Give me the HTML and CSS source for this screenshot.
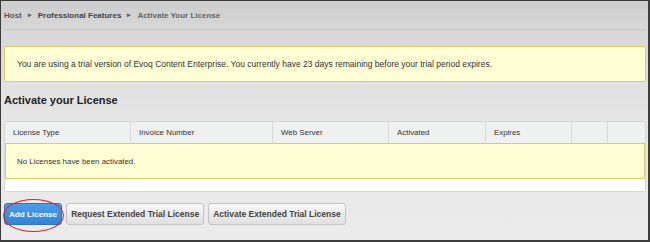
FILE: index.html
```html
<!DOCTYPE html>
<html>
<head>
<meta charset="utf-8">
<link rel="stylesheet" href="styles.css">
</head>
<body>
<div class="frame">
  <div class="breadcrumb">
    <span class="crumb crumb-host">Host</span>
    <span class="sep">&#9656;</span>
    <span class="crumb crumb-mid">Professional Features</span>
    <span class="sep">&#9656;</span>
    <span class="crumb crumb-current">Activate Your License</span>
  </div>
  <div class="notice">You are using a trial version of Evoq Content Enterprise. You currently have 23 days remaining before your trial period expires.</div>
  <h2 class="heading">Activate your License</h2>
  <div class="grid-wrap">
    <div class="grid-head">
      <div class="th c1">License Type</div>
      <div class="th c2">Invoice Number</div>
      <div class="th c3">Web Server</div>
      <div class="th c4">Activated</div>
      <div class="th c5">Expires</div>
      <div class="th c6"></div>
      <div class="th c7"></div>
    </div>
    <div class="empty-row">No Licenses have been activated.</div>
  </div>
  <div class="actions">
    <div class="primary-wrap">
      <button class="btn btn-primary">Add License</button>
      <span class="highlight"></span>
    </div>
    <button class="btn">Request Extended Trial License</button>
    <button class="btn">Activate Extended Trial License</button>
  </div>
</div>
</body>
</html>
```
FILE: styles.css
```css
html, body {
  margin: 0;
  padding: 0;
}
body {
  font-family: "Liberation Sans", Arial, sans-serif;
  width: 650px;
  height: 242px;
  overflow: hidden;
}
.frame {
  box-sizing: border-box;
  width: 650px;
  height: 242px;
  border-top: 1px solid #3d3d3d;
  border-left: 1px solid #3d3d3d;
  border-right: 2px solid #3d3d3d;
  border-bottom: 2px solid #3d3d3d;
  background: linear-gradient(to bottom, #cdcdcd 0px, #d9d9d9 35px, #e6e6e6 120px, #ebebeb 240px);
  padding: 0 2px 0 3px;
}
.breadcrumb {
  display: flex;
  align-items: center;
  height: 28px;
  border-bottom: 1px solid #c6c6c6;
  font-size: 8px;
  font-weight: bold;
  color: #555;
}
.crumb-host { color: #5a5a5a; }
.crumb-mid { color: #444; }
.crumb-current { color: #666; }
.sep {
  font-size: 7px;
  color: #666;
  margin: 0 6px;
}
.notice {
  margin-top: 16px;
  box-sizing: border-box;
  height: 36px;
  display: flex;
  align-items: center;
  padding-left: 12px;
  background: #ffffd5;
  border: 1px solid #dfcc66;
  border-radius: 2px;
  font-size: 8.5px;
  color: #333;
}
.heading {
  margin: 0;
  box-sizing: border-box;
  height: 39px;
  padding-bottom: 4px;
  display: flex;
  align-items: center;
  font-size: 11px;
  font-weight: bold;
  color: #222;
}
.grid-wrap {
  box-sizing: border-box;
  height: 71px;
  background: #fff;
  border: 1px solid #d6d6d6;
  border-radius: 2px;
}
.grid-head {
  display: grid;
  grid-template-columns: 126px 142px 116px 97px 86px 36px 1fr;
  height: 21px;
  background: #eff0f0;
}
.th {
  display: flex;
  align-items: center;
  padding-left: 8px;
  font-size: 7.9px;
  color: #333;
  border-right: 1px solid #d9d9d9;
}
.th.c7 { border-right: none; }
.empty-row {
  box-sizing: border-box;
  height: 36px;
  display: flex;
  align-items: center;
  padding-left: 11px;
  background: #ffffd5;
  border: 1px solid #ddcc66;
  font-size: 7.9px;
  color: #333;
}
.actions {
  display: flex;
  gap: 4px;
  margin-top: 11px;
}
.primary-wrap {
  position: relative;
  display: flex;
}
.btn {
  box-sizing: border-box;
  height: 22px;
  padding: 0 4px;
  font-family: "Liberation Sans", Arial, sans-serif;
  font-size: 8.5px;
  font-weight: bold;
  color: #444;
  background: linear-gradient(to bottom, #f7f7f7, #e0e0e0);
  border: 1px solid #c4c4c4;
  border-radius: 3px;
}
.btn-primary {
  font-size: 8.1px;
  color: #fff;
  background: linear-gradient(to bottom, #4c9ee8, #3183d6);
  border-color: #2a74c0;
}
.highlight {
  position: absolute;
  left: -1px;
  top: -4px;
  width: 61px;
  height: 33px;
  border: 1.5px solid #e0212a;
  border-radius: 50%;
  box-sizing: border-box;
  pointer-events: none;
}
```
